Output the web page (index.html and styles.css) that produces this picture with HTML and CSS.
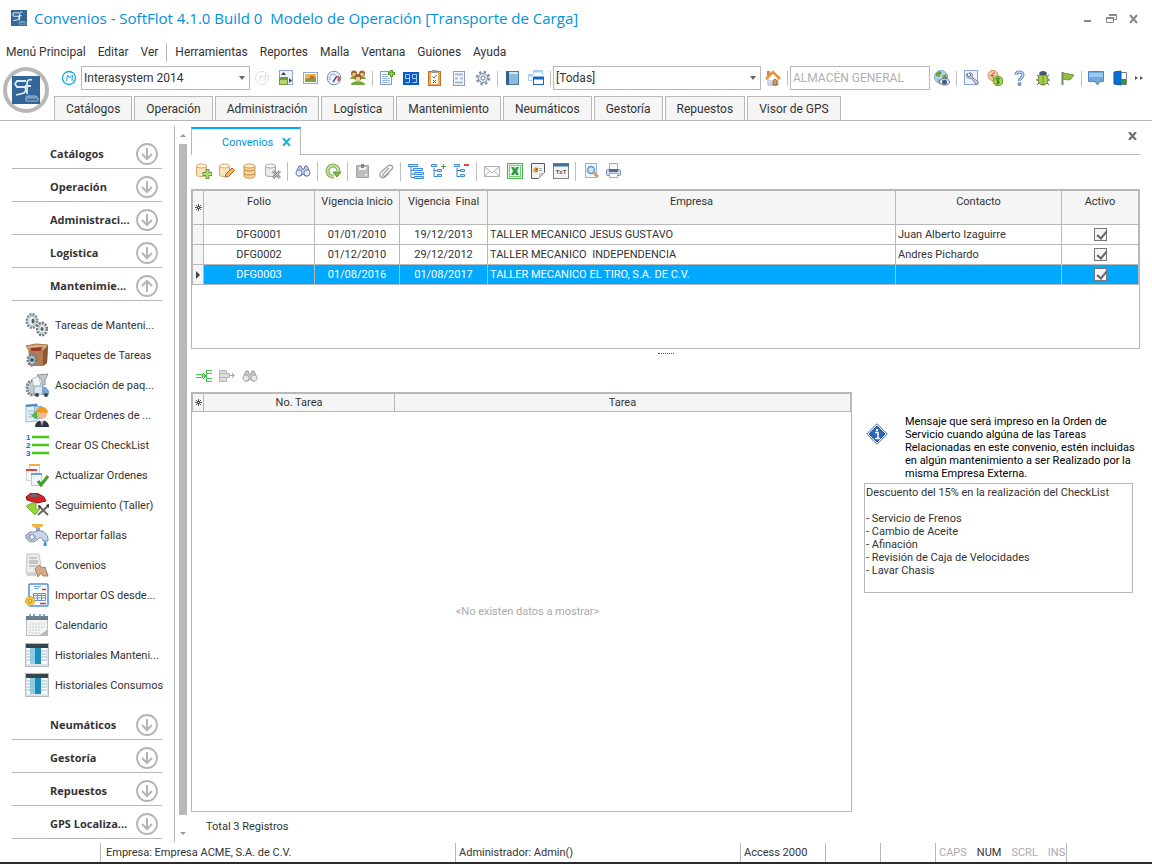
FILE: index.html
```html
<!DOCTYPE html>
<html lang="es">
<head>
    <meta charset="UTF-8">
    <meta name="viewport" content="width=device-width, initial-scale=1.0">
    <title>Convenios - SoftFlot 4.1.0 Build 0</title>
    <link rel="stylesheet" href="styles.css">
</head>
<body>
    <!-- Icon sprite -->
    <svg class="sprite" aria-hidden="true">
        <symbol id="logo" viewBox="0 0 28 28">
            <rect width="28" height="28" fill="#336699"/>
            <path d="M14 5H5L3 8l2 3h8l1 3-2 3-8 2M15 7v11M15 8c0-4 2-5 5-4M13 10h6" fill="none" stroke="#dce8f2" stroke-width="1.800"/>
            <path d="M15 20h9l2 2v3H14v-4z" fill="none" stroke="#9dbcd8"/>
            <path d="M14 22h11M17 20v2M20 20v2M23 20v2" stroke="#9dbcd8"/>
        </symbol>
        <symbol id="m-blue" viewBox="0 0 16 16">
            <circle cx="8" cy="8" r="6.500" fill="#fff" stroke="#14a5e8" stroke-width="1.300"/>
            <path d="M5.500 11l1-6 2 3 3-3-.5 6" fill="none" stroke="#14a5e8"/>
        </symbol>
        <symbol id="m-grey" viewBox="0 0 16 16">
            <circle cx="8" cy="8" r="6.500" fill="#fff" stroke="#dcdcdc"/>
            <path d="M5.500 11l1-6 2 3 3-3-.5 6" fill="none" stroke="#dcdcdc"/>
        </symbol>
        <symbol id="resize" viewBox="0 0 16 16">
            <rect x="1.500" y=".5" width="13" height="14" fill="#eef3fb" stroke="#8aa3d0"/>
            <rect x="1" y="7" width="9" height="8" fill="#6d9a32"/>
            <rect x="2" y="10" width="7" height="4" fill="#b5d66e"/>
            <path d="M3 5l2.500-3L8 5zM11 8l3 2.500L11 13z" fill="#444"/>
        </symbol>
        <symbol id="photo" viewBox="0 0 16 16">
            <rect x="1.500" y="2.500" width="14" height="11" fill="#fff" stroke="#8ea6dc"/>
            <rect x="3" y="4" width="11" height="8" fill="#f0b540"/>
            <path d="M3 9l4-1 3 1 4-2v5H3z" fill="#7ba04a"/>
            <path d="M8 5l1 1h2l1-1v4H8z" fill="#c46a2c"/>
        </symbol>
        <symbol id="gauge" viewBox="0 0 16 16">
            <circle cx="8" cy="8" r="6.800" fill="#eef4fc" stroke="#6d8cc4"/>
            <path d="M4 10a4 4 0 0 1 6-5" fill="none" stroke="#86a4d4" stroke-width="2" stroke-dasharray="1 1"/>
            <path d="M12 6a4 4 0 0 1 0 5" fill="none" stroke="#e04c3c" stroke-width="2"/>
            <path d="M7 12l4-6" stroke="#3d568e" stroke-width="1.500"/>
        </symbol>
        <symbol id="people" viewBox="0 0 16 16">
            <path d="M0 9c1-4 6-4 7 0zM9 9c1-4 6-4 7 0z" fill="#7fa534"/>
            <circle cx="4" cy="3.500" r="3" fill="#a8652c"/>
            <circle cx="12" cy="3.500" r="3" fill="#a8652c"/>
            <circle cx="4" cy="4.500" r="1.800" fill="#f1c596"/>
            <circle cx="12" cy="4.500" r="1.800" fill="#f1c596"/>
            <path d="M1 15c0-5 14-5 14 0z" fill="#6da83a"/>
            <circle cx="8" cy="7.500" r="3.500" fill="#9c5c28"/>
            <circle cx="8" cy="9" r="2.300" fill="#f5cfa3"/>
        </symbol>
        <symbol id="sheet-add" viewBox="0 0 16 16">
            <rect x="1.500" y="1.500" width="11" height="13" fill="#fff" stroke="#7f9bd0"/>
            <path d="M3 4.500h6M3 6.500h6M3 8.500h8M3 10.500h8M3 12.500h8" stroke="#9ab3e0"/>
            <path d="M12.500 0v7M9 3.500h7" stroke="#5b9a2a" stroke-width="3"/>
            <path d="M12.500 1v5M10 3.500h5" stroke="#a4d65e"/>
        </symbol>
        <symbol id="ninety-nine" viewBox="0 0 16 16">
            <rect y="2" width="16" height="13" fill="#0b5cc8"/>
            <path d="M6.500 8.500h-4v-4h4v8h-4M13.500 8.500h-4v-4h4v8h-4" fill="none" stroke="#a9cdf4"/>
        </symbol>
        <symbol id="clipboard" viewBox="0 0 16 16">
            <rect x="1.500" y="1.500" width="12" height="14" fill="#eeaa58" stroke="#b8742c"/>
            <rect x="4" y="3" width="7" height="11" fill="#fff"/>
            <rect x="5" y="0" width="5" height="3" fill="#999"/>
            <path d="M5.500 6.500l1.500 1.500 2.500-3" fill="none" stroke="#3b8b2a"/>
            <path d="M6 10l3 3M9 10l-3 3" stroke="#c42b2b"/>
        </symbol>
        <symbol id="form" viewBox="0 0 16 16">
            <rect x="2.500" y="1.500" width="11" height="14" fill="#f4f8fe" stroke="#8d9cc5"/>
            <path d="M4 4.500h8M4 8.500h3M9 8.500h3M4 12.500h8" stroke="#a4b8e0" stroke-width="2"/>
        </symbol>
        <symbol id="gear" viewBox="0 0 16 16">
            <circle cx="8" cy="8" r="6" fill="none" stroke="#8592aa" stroke-width="2.500" stroke-dasharray="2.500 2.200"/>
            <circle cx="8" cy="8" r="4.500" fill="#e4e9f1" stroke="#8592aa"/>
            <circle cx="8" cy="8" r="2" fill="#fff" stroke="#71809b"/>
        </symbol>
        <symbol id="book" viewBox="0 0 16 16">
            <rect x="2.500" y="1.500" width="12" height="13" fill="#8abce0" stroke="#4a7aa8"/>
            <rect x="2" y="1" width="3" height="14" fill="#355f8c"/>
            <path d="M5 3h9" stroke="#cfe4f4" stroke-width="2"/>
        </symbol>
        <symbol id="windows" viewBox="0 0 16 16">
            <path d="M5.500 4V.5h9V5M.5 10.500v-6h5M.5 10.500h4" fill="none" stroke="#a9cdf4"/>
            <path d="M5 1.500h10M0 5.500h5" stroke="#a9cdf4" stroke-width="2"/>
            <rect x="5.500" y="7.500" width="10" height="7" fill="#fff" stroke="#1066cc"/>
            <path d="M5 8h11" stroke="#1066cc" stroke-width="3"/>
        </symbol>
        <symbol id="home" viewBox="0 0 16 16">
            <rect x="2" y="1" width="3" height="5" fill="#d8843e"/>
            <path d="M3 8l5-5 5 5v7H3z" fill="#fff" stroke="#97a9c8"/>
            <path d="M1 9l7-7 7 7" fill="none" stroke="#e8923a" stroke-width="2.500"/>
            <path d="M8 15v-4c0-2 4-2 4 0v4z" fill="#d09c60" stroke="#976330"/>
            <path d="M4 11h3M4 13h3" stroke="#8fb0e0"/>
        </symbol>
        <symbol id="globe" viewBox="0 0 16 16">
            <circle cx="7" cy="7" r="6.500" fill="#b4d4ee" stroke="#7ba0c4"/>
            <path d="M2 3l4-2 2 2-3 4-3-1zM8 6l4-2 1 4-3 2zM3 9l3 1v3z" fill="#6ba043"/>
            <path d="M5 12c2-5 9-5 11 0-2 4-9 4-11 0z" fill="#e4ebf8" stroke="#5c6a8c"/>
            <circle cx="10.500" cy="12" r="2.500" fill="#4a5b86"/>
        </symbol>
        <symbol id="wrench" viewBox="0 0 16 16">
            <rect x="1.500" y=".5" width="13" height="14" fill="#eff4fc" stroke="#8aa1d6"/>
            <path d="M5 3c-3 3-1 6 3 5l5 6c2 1 3-1 2-2l-6-5c1-3-1-5-3-4l2 2-2 2-2-2z" fill="#d2dae8" stroke="#68789c"/>
        </symbol>
        <symbol id="coins" viewBox="0 0 16 16">
            <circle cx="6" cy="5.500" r="5" fill="#f8cca4" stroke="#d08a54"/>
            <path d="M8 3c-4-1-4 6 0 5M3 5.500h4" fill="none" stroke="#b8642c"/>
            <circle cx="11" cy="11" r="4.800" fill="#a8d450" stroke="#5f9428"/>
            <path d="M13 9c-4-2-5 1-2 2s1 3-2 2M11 7.500v7" fill="none" stroke="#2f6e10"/>
        </symbol>
        <symbol id="help" viewBox="0 0 16 16">
            <path d="M5 5c0-4 7-4 7 0 0 3-3.500 2.500-3.500 6" fill="none" stroke="#5a80bc" stroke-width="3"/>
            <path d="M5 5c0-4 7-4 7 0 0 3-3.500 2.500-3.500 6" fill="none" stroke="#b4d4f4" stroke-width="1.500"/>
            <circle cx="8.500" cy="14" r="1.500" fill="#7daade" stroke="#5a80bc"/>
        </symbol>
        <symbol id="bug" viewBox="0 0 16 16">
            <path d="M2 5l3 2M14 5l-3 2M1 10h14M2 15l3-3M14 15l-3-3" stroke="#556" fill="none"/>
            <ellipse cx="8" cy="9.500" rx="5" ry="5.500" fill="#a4cc44" stroke="#5f7f2e"/>
            <path d="M4 4c0-4 8-4 8 0-2 2-6 2-8 0z" fill="#4a5570"/>
            <path d="M8 5v10" stroke="#6f9432"/>
        </symbol>
        <symbol id="flag" viewBox="0 0 16 16">
            <path d="M3.500 2v13" stroke="#787" stroke-width="2"/>
            <path d="M4 3l6 1 5 1-3 4-3 1-5-1z" fill="#93bf49" stroke="#6f9a3c"/>
        </symbol>
        <symbol id="chat" viewBox="0 0 16 16">
            <path d="M.5 1.500h15v10H12L9.500 15 7 11.500H.5z" fill="#6fa9de" stroke="#4f86c0"/>
            <path d="M1 3h14v4H1z" fill="#9ccaf0"/>
        </symbol>
        <symbol id="exit" viewBox="0 0 16 16">
            <path d="M7.500 2.500h7v12h-7z" fill="#fff" stroke="#7a8594"/>
            <path d="M2 2l7-1v14l-7-1z" fill="#0c6ed4" stroke="#0c56aa"/>
            <rect x="9" y="9" width="5" height="5" fill="#1f9e3c"/>
        </symbol>
        <symbol id="db" viewBox="0 0 16 16">
            <path d="M2 3v10c0 3 11 3 11 0V3z" fill="#f6d49c" stroke="#cc9654"/>
            <path d="M2 6.500c2 2 9 2 11 0M2 10.500c2 2 9 2 11 0" fill="none" stroke="#c0843c"/>
            <ellipse cx="7.500" cy="3" rx="5.500" ry="2" fill="#fdf0d8" stroke="#cc9654"/>
        </symbol>
        <symbol id="db-add" viewBox="0 0 16 16">
            <path d="M.5 3v9c0 2 10 2 10 0V3z" fill="#fae3bd" stroke="#d8a66a"/>
            <ellipse cx="5.500" cy="3" rx="5" ry="2" fill="#fff5e4" stroke="#d8a66a"/>
            <path d="M11.500 6v10M6.500 11h10" stroke="#64983c" stroke-width="4"/>
            <path d="M11.500 7v8M7.500 11h8" stroke="#b4e07a" stroke-width="2"/>
        </symbol>
        <symbol id="db-edit" viewBox="0 0 16 16">
            <path d="M.5 3v9c0 2 10 2 10 0V3z" fill="#fae3bd" stroke="#d8a66a"/>
            <ellipse cx="5.500" cy="3" rx="5" ry="2" fill="#fff5e4" stroke="#d8a66a"/>
            <path d="M6 14l1-3 6-6 2.500 2.500-6 6z" fill="#f4b860" stroke="#a86a2c"/>
        </symbol>
        <symbol id="db-del" viewBox="0 0 16 16">
            <path d="M.5 3v9c0 2 10 2 10 0V3z" fill="#ececec" stroke="#a8a8a8"/>
            <ellipse cx="5.500" cy="3" rx="5" ry="2" fill="#f8f8f8" stroke="#a8a8a8"/>
            <path d="M8 8l7 7M15 8l-7 7" stroke="#8c8c8c" stroke-width="3"/>
            <path d="M8 8l7 7M15 8l-7 7" stroke="#cfcfcf"/>
        </symbol>
        <symbol id="find" viewBox="0 0 16 16">
            <path d="M3 5l1-2h2l1 3h2l1-3h2l1 2 2 5-2 3h-3l-2-2-2 2H3l-2-3z" fill="#bccae4" stroke="#6a7da4"/>
            <circle cx="4" cy="10" r="3" fill="#e4ecf8" stroke="#7088b8"/>
            <circle cx="12" cy="10" r="3" fill="#e4ecf8" stroke="#7088b8"/>
        </symbol>
        <symbol id="find-grey" viewBox="0 0 16 16">
            <path d="M3 5l1-2h2l1 3h2l1-3h2l1 2 2 5-2 3h-3l-2-2-2 2H3l-2-3z" fill="#c8c8c8" stroke="#a0a0a0"/>
            <circle cx="4" cy="10" r="3" fill="#e8e8e8" stroke="#b0b0b0"/>
            <circle cx="12" cy="10" r="3" fill="#e8e8e8" stroke="#b0b0b0"/>
        </symbol>
        <symbol id="refresh" viewBox="0 0 16 16">
            <path d="M9 13.500A5.500 5.500 0 1 1 13.500 8" fill="none" stroke="#88ac5c" stroke-width="4"/>
            <path d="M9 13.500A5.500 5.500 0 1 1 13.500 8" fill="none" stroke="#c4e09c" stroke-width="2"/>
            <path d="M8 9h8l-4 5z" fill="#7fb848" stroke="#5d8f32"/>
        </symbol>
        <symbol id="note" viewBox="0 0 16 16">
            <path d="M1.500 2.500h12v12h-12z" fill="#bdbdbd" stroke="#a4a4a4"/>
            <rect x="4" y="4" width="7" height="3" fill="#f4f4f4"/>
            <path d="M6 1h3v4H6z" fill="#888"/>
            <path d="M10 14v-3h3z" fill="#eee"/>
        </symbol>
        <symbol id="clip" viewBox="0 0 16 16">
            <path d="M11 5l-6 6c-1 2 1 3 2 2l7-7c2-3-2-5-4-3L3 9c-3 4 1 7 4 5l4-4" fill="none" stroke="#9c9c9c" stroke-width="1.200"/>
        </symbol>
        <symbol id="tree" viewBox="0 0 16 16">
            <path d="M3 4v10.500h4M3 7.500h4M3 11h4" fill="none" stroke="#3c8ce0"/>
            <path d="M.5 1.500h9v2h-9zM5.500 5.500h9v2h-9zM6.500 9.500h9v2h-9zM6.500 13.500h9v2h-9z" fill="#d4e8fc" stroke="#3c8ce0"/>
        </symbol>
        <symbol id="tree-add" viewBox="0 0 16 16">
            <path d="M3 5v8.500h3M3 7.500h3" fill="none" stroke="#3c7cd0"/>
            <path d="M.5 1.500h5v2h-5zM6.500 6.500h4v2h-4zM6.500 11.500h4v2h-4z" fill="#d4e8fc" stroke="#3c8ce0"/>
            <path d="M12.500 1v5M10 3.500h5" stroke="#3f9a4c"/>
        </symbol>
        <symbol id="tree-del" viewBox="0 0 16 16">
            <path d="M3 5v8.500h3M3 7.500h3" fill="none" stroke="#3c7cd0"/>
            <path d="M.5 1.500h5v2h-5zM6.500 6.500h4v2h-4zM6.500 11.500h4v2h-4z" fill="#d4e8fc" stroke="#3c8ce0"/>
            <path d="M10 2h5" stroke="#dc4c30" stroke-width="2"/>
        </symbol>
        <symbol id="mail" viewBox="0 0 16 16">
            <path d="M.5 3.500h15v10H.5z" fill="#fafafa" stroke="#b0b0b0"/>
            <path d="M1 4l7 6 7-6M1 13l5-5M15 13l-5-5" fill="none" stroke="#b8b8b8"/>
        </symbol>
        <symbol id="excel" viewBox="0 0 16 16">
            <rect x=".5" y=".5" width="15" height="15" fill="#d8f4d4" stroke="#48b858"/>
            <rect x="2.500" y="2.500" width="11" height="11" fill="#eefaea" stroke="#7ccc7c"/>
            <path d="M4 4h3l1 2 1-2h3l-2 4 2 4H9L8 10l-1 2H4l2-4z" fill="#2f9a46"/>
        </symbol>
        <symbol id="chart-doc" viewBox="0 0 16 16">
            <path d="M1.500.5h13v9l-6 6h-7z" fill="#f2f2f2" stroke="#5a5a5a"/>
            <path d="M9 15v-5h5z" fill="#ccc"/>
            <circle cx="5.500" cy="7" r="2.500" fill="#f0b030"/>
            <path d="M5.500 7V4.500A2.500 2.500 0 0 1 8 7z" fill="#e03c2c"/>
            <path d="M5.500 7H8a2.500 2.500 0 0 1-2.500 2.500z" fill="#66a83c"/>
            <path d="M9 5.500h3M9 7.500h3" stroke="#9ab"/>
        </symbol>
        <symbol id="preview" viewBox="0 0 16 16">
            <rect x="2.500" y=".5" width="11" height="14" fill="#f0f5fd" stroke="#9cb0d8"/>
            <circle cx="8" cy="7" r="3.500" fill="#cce4f8" stroke="#6a90cc" stroke-width="1.500"/>
            <path d="M11 10l4 4" stroke="#d89a5c" stroke-width="3"/>
        </symbol>
        <symbol id="print" viewBox="0 0 16 16">
            <path d="M3.500.5h8v6h-8z" fill="#f4f8ff" stroke="#9aaad0"/>
            <rect x=".5" y="6.500" width="14" height="6" rx="1" fill="#ccd6ec" stroke="#7c8eb8"/>
            <rect x="3" y="6" width="9" height="3" fill="#56679a"/>
            <path d="M3.500 10.500h8v4h-8z" fill="#fff" stroke="#9aaad0"/>
        </symbol>
        <symbol id="row-in" viewBox="0 0 16 16">
            <path d="M0 6.500h6M0 9.500h6M6.500 6v4M10.500 2v12M10.500 2.500H16M10.500 5.500H16M10.500 10.500H16M10.500 13.500H16" fill="none" stroke="#43cc4c"/>
            <path d="M6 8h4M7 5l3 3-3 3" fill="none" stroke="#348c40"/>
        </symbol>
        <symbol id="row-out" viewBox="0 0 16 16">
            <path d="M.5 2.500h7v3h3v4h-3v4h-7zM.5 5.500h7M.5 9.500h7" fill="#ddd" stroke="#b4b4b4"/>
            <path d="M10 7.500h5M13 5l2.500 2.500L13 10" fill="none" stroke="#a4a4a4"/>
        </symbol>
        <symbol id="new-row" viewBox="0 0 7 7">
            <path d="M3.500 0v7M0 3.500h7M1 1l5 5M6 1L1 6" stroke="#555"/>
            <rect x="3" y="3" width="1" height="1" fill="#fff"/>
        </symbol>
        <symbol id="down" viewBox="0 0 22 22">
            <circle cx="11" cy="11" r="10" fill="#fff" stroke="#b4b4b4" stroke-width="1.800"/>
            <path d="M11 5v11M6 11l5 5 5-5" fill="none" stroke="#b4b4b4" stroke-width="2"/>
        </symbol>
        <symbol id="up" viewBox="0 0 22 22">
            <circle cx="11" cy="11" r="10" fill="#fff" stroke="#b4b4b4" stroke-width="1.800"/>
            <path d="M11 17V6M6 11l5-5 5 5" fill="none" stroke="#b4b4b4" stroke-width="2"/>
        </symbol>

        <!-- Side menu icons -->
        <symbol id="s-gears" viewBox="0 0 24 24">
            <ellipse cx="7" cy="8" rx="5" ry="6.500" fill="#d4dce0" stroke="#7c8a92" stroke-width="3" stroke-dasharray="2 1"/>
            <ellipse cx="7" cy="8" rx="4.500" ry="5.500" fill="#c4ced4"/>
            <ellipse cx="7" cy="8" rx="3" ry="4" fill="#eef2f4"/>
            <ellipse cx="8" cy="8" rx="1.500" ry="2.500" fill="#4c5c64"/>
            <ellipse cx="17" cy="16" rx="4.500" ry="6" fill="#e0e6ea" stroke="#68767e" stroke-width="3" stroke-dasharray="2 1"/>
            <ellipse cx="17" cy="16" rx="4" ry="5" fill="#c4ced4"/>
            <ellipse cx="17" cy="16" rx="2.500" ry="3.500" fill="#eef2f4"/>
            <ellipse cx="17" cy="16" rx="1.500" ry="2" fill="#4c5c64"/>
        </symbol>
        <symbol id="s-box" viewBox="0 0 24 24">
            <path d="M3 5l15-1 5-2-1 18-4 3H5z" fill="#b47c50"/>
            <path d="M1 3l10-2 12 1-4 5H4z" fill="#d8b088" stroke="#a57040"/>
            <path d="M5 5l13-1-3 4H7z" fill="#9c3828"/>
            <path d="M18 8l5-5-1 17-4 3z" fill="#8c5834"/>
            <ellipse cx="7" cy="17" rx="4" ry="5" fill="#cfd8dc" stroke="#6c7c84" stroke-width="3" stroke-dasharray="2 1"/>
            <circle cx="7" cy="17" r="2" fill="#4a5a62"/>
        </symbol>
        <symbol id="s-truck" viewBox="0 0 24 24">
            <ellipse cx="7" cy="15" rx="5" ry="7" fill="#c4ccd2" stroke="#78868e" stroke-width="3" stroke-dasharray="2 1"/>
            <path d="M7 6l7-3 2 10-7 2z" fill="#f4f6f8" stroke="#b4bcc4"/>
            <path d="M12 2l11-1-3 6v5h-3V7z" fill="#c4c9ce" stroke="#8c949c"/>
            <path d="M9 13h9v8H9z" fill="#dce6f0" stroke="#94a4b4"/>
            <path d="M17 14h4l3 4v4h-7z" fill="#7aa4d0"/>
            <circle cx="12" cy="22" r="2" fill="#444"/>
            <circle cx="21" cy="22" r="2" fill="#444"/>
        </symbol>
        <symbol id="s-worker" viewBox="0 0 24 24">
            <path d="M1 2l11-1v17l-11 1z" fill="#e8f1fa" stroke="#a0b8cc"/>
            <path d="M1 3l11-1" stroke="#4484c4" stroke-width="2"/>
            <path d="M9.500 3.500h7v12h-7z" fill="#b8d8f4" stroke="#7cb0e0"/>
            <path d="M3 8h7M3 11h6M3 14h5" stroke="#9db8d0"/>
            <path d="M6 13l6-6v3h4v4h-4v2z" fill="#58b43c"/>
            <circle cx="17" cy="11" r="5" fill="#efb98c"/>
            <path d="M11 9c1-7 11-7 12 1z" fill="#f09a20"/>
            <path d="M10 24c0-9 14-9 14 0z" fill="#28344c"/>
            <path d="M15 17h4l-2 6z" fill="#fff"/>
            <path d="M17 18v5" stroke="#c42c2c"/>
        </symbol>
        <symbol id="s-update" viewBox="0 0 24 24">
            <path d="M4.500 1.500h10v12h-10z" fill="#f6f8fa" stroke="#ccd2d8"/>
            <path d="M4 2h11" stroke="#f0b040" stroke-width="2"/>
            <path d="M1.500 6.500h10v11h-10z" fill="#f6f8fa" stroke="#ccd2d8"/>
            <path d="M1 7h11" stroke="#dc4444" stroke-width="2"/>
            <path d="M6.500 10.500h10v12h-10z" fill="#f1f6fc" stroke="#b9cad8"/>
            <path d="M6 11h11" stroke="#6c9cdc" stroke-width="2"/>
            <path d="M13 18l3 4 7-9" fill="none" stroke="#459c28" stroke-width="3"/>
        </symbol>
        <symbol id="s-car" viewBox="0 0 24 24">
            <path d="M1 4l5-4h6l7 4 2 4-9 2-10-3z" fill="#d42424" stroke="#8c1c1c"/>
            <path d="M6 1h5l2 3H5z" fill="#646c78"/>
            <path d="M1 13l6-3 4 1v5h4l-5 6-6-6z" fill="#94d434" stroke="#7ab438"/>
            <path d="M13 22l10-9M14 13l9 9" stroke="#666" stroke-width="2"/>
            <path d="M13 12l3 1-2 3zM21 12l3-1v4z" fill="#333"/>
        </symbol>
        <symbol id="s-tap" viewBox="0 0 24 24">
            <path d="M7 1h11v2l-4 2h-4L7 3z" fill="#f0b43c"/>
            <path d="M11 5h4v5h-4z" fill="#96a2bc"/>
            <path d="M1 12l4-3h5c3-2 8-2 11 2 2 2 2 5 2 7h-5c0-4-3-4-5-2-3 4-9 4-12-1z" fill="#ccd6ea" stroke="#7c88a6"/>
            <path d="M3 10l8 3 1 3-6 2-4-3z" fill="#a9b6d2"/>
            <circle cx="7" cy="14" r="2.500" fill="#eef4ff" stroke="#7c8aa8"/>
            <path d="M20 18c-2 3-2 5 0 5s3-2 0-5z" fill="#3c94e4"/>
        </symbol>
        <symbol id="s-deal" viewBox="0 0 24 24">
            <path d="M2 1h12l3 19H1z" fill="#ececec" stroke="#c4c4c4"/>
            <path d="M4 5h8M4 8h9M4 10h9M4 13h8" stroke="#9c9c9c"/>
            <path d="M10 16l4-4 3 3 3-1 3 9h-5l-2-3-3 4z" fill="#d4ac88" stroke="#a48464"/>
            <path d="M1 20h10v3H2z" fill="#d0d0d0"/>
        </symbol>
        <symbol id="s-import" viewBox="0 0 24 24">
            <rect x="4" y="1" width="19" height="22" rx="1" fill="#fafdff" stroke="#4c90e0" stroke-width="1.500"/>
            <path d="M9 3.500h7M9 5.500h5" stroke="#78a8dc"/>
            <path d="M17 6.500h4M15 20.500h6" stroke="#dc3030" stroke-width="1.500"/>
            <path d="M8.500 10.500h12v7h-12zM8 12.500h12M8 15h12M12.500 10v8M16.500 10v8" fill="none" stroke="#6c94cc"/>
            <circle cx="5" cy="18" r="4.500" fill="#f8cc4c" stroke="#dca42c"/>
            <circle cx="5" cy="18" r="2" fill="none" stroke="#c8901c"/>
        </symbol>
        <symbol id="s-calendar" viewBox="0 0 24 24">
            <rect x="1.500" y="3.500" width="21" height="19" fill="#f2f4f4" stroke="#b4bcc0"/>
            <path d="M1 3h22v4H1z" fill="#6e7c88"/>
            <path d="M5 1v4M9 1v4M15 1v4M19 1v4" stroke="#5c90b8" stroke-width="1.500"/>
            <path d="M4 11h16M4 14h16M4 17h12M4 20h12" stroke="#c4cacc" stroke-dasharray="2 1"/>
            <path d="M15 22l7-5v6z" fill="#b4bcc0"/>
        </symbol>
        <symbol id="s-history" viewBox="0 0 24 24">
            <rect x=".5" y=".5" width="23" height="23" fill="#dfe3e5" stroke="#b4babe"/>
            <path d="M2 4h20v17H2z" fill="#fff"/>
            <path d="M1 3h22" stroke="#36444c" stroke-width="4"/>
            <path d="M5 5h5v16H5z" fill="#8cd0f0"/>
            <path d="M10 5h6v16h-6z" fill="#1c8cb8"/>
            <path d="M2 8h20M2 11h20M2 14h20M2 17h20" stroke="#98b8c8" stroke-dasharray="8 6"/>
        </symbol>
        <symbol id="info" viewBox="0 0 22 22">
            <path d="M11 .7L21.300 11 11 21.300.7 11z" fill="#fff" stroke="#3c6cb0"/>
            <path d="M11 3l8 8-8 8-8-8z" fill="#2b66b8" stroke="#1d4f98"/>
            <path d="M9 9.500h3V15M9 15.500h5" fill="none" stroke="#fff" stroke-width="1.500"/>
            <rect x="10" y="6" width="2" height="2" fill="#fff"/>
        </symbol>
    </svg>

    <header>
        <div class="titlebar">
            <svg class="icon"><use href="#logo"/></svg>
            <h1>Convenios - SoftFlot 4.1.0 Build 0&nbsp; Modelo de Operación [Transporte de Carga]</h1>
            <div class="window-buttons">
                <button type="button" aria-label="Minimizar"><svg class="icon" viewBox="0 0 16 16"><path d="M4 11h7" stroke="#8a8a8a" stroke-width="2"/></svg></button>
                <button type="button" aria-label="Restaurar"><svg class="icon" viewBox="0 0 16 16"><path d="M6.500 6V4.500h7v5H11M3.500 7.500h7v5h-7z" fill="none" stroke="#8a8a8a"/><path d="M6 5h8M3 8h8" stroke="#8a8a8a" stroke-width="2"/></svg></button>
                <button type="button" aria-label="Cerrar"><svg class="icon" viewBox="0 0 16 16"><path d="M4 5l7 8M11 5l-7 8" stroke="#8a8a8a" stroke-width="2"/></svg></button>
            </div>
        </div>

        <nav class="menubar">
            <a href="#">Menú Principal</a>
            <a href="#">Editar</a>
            <a href="#">Ver</a>
            <span class="divider"></span>
            <a href="#">Herramientas</a>
            <a href="#">Reportes</a>
            <a href="#">Malla</a>
            <a href="#">Ventana</a>
            <a href="#">Guiones</a>
            <a href="#">Ayuda</a>
        </nav>

        <div class="ribbon">
            <div class="app-logo"><svg><use href="#logo"/></svg></div>
            <div class="ribbon-rows">
                <div class="toolbar main-toolbar">
                    <button type="button" aria-label="Modelo"><svg class="icon"><use href="#m-blue"/></svg></button>
                    <div class="combo combo-model">
                        <select aria-label="Modelo de operación"><option>Interasystem 2014</option></select>
                    </div>
                    <button type="button" aria-label="Modelo anterior" disabled><svg class="icon"><use href="#m-grey"/></svg></button>
                    <button type="button" aria-label="Dimensiones"><svg class="icon"><use href="#resize"/></svg></button>
                    <button type="button" aria-label="Imágenes"><svg class="icon"><use href="#photo"/></svg></button>
                    <button type="button" aria-label="Tablero"><svg class="icon"><use href="#gauge"/></svg></button>
                    <button type="button" aria-label="Usuarios"><svg class="icon"><use href="#people"/></svg></button>
                    <span class="divider"></span>
                    <button type="button" aria-label="Nueva orden"><svg class="icon"><use href="#sheet-add"/></svg></button>
                    <button type="button" aria-label="Odómetro"><svg class="icon"><use href="#ninety-nine"/></svg></button>
                    <button type="button" aria-label="Checklist"><svg class="icon"><use href="#clipboard"/></svg></button>
                    <button type="button" aria-label="Formato"><svg class="icon"><use href="#form"/></svg></button>
                    <button type="button" aria-label="Configuración"><svg class="icon"><use href="#gear"/></svg></button>
                    <span class="divider"></span>
                    <button type="button" aria-label="Bitácora"><svg class="icon"><use href="#book"/></svg></button>
                    <button type="button" aria-label="Ventanas"><svg class="icon"><use href="#windows"/></svg></button>
                    <span class="divider"></span>
                    <div class="combo combo-filter">
                        <select aria-label="Filtro"><option>[Todas]</option></select>
                    </div>
                    <button type="button" aria-label="Inicio"><svg class="icon"><use href="#home"/></svg></button>
                    <span class="divider"></span>
                    <input class="warehouse" type="text" value="ALMACÉN GENERAL" aria-label="Almacén" disabled>
                    <button type="button" aria-label="Localizar"><svg class="icon"><use href="#globe"/></svg></button>
                    <span class="divider"></span>
                    <button type="button" aria-label="Herramientas"><svg class="icon"><use href="#wrench"/></svg></button>
                    <button type="button" aria-label="Monedas"><svg class="icon"><use href="#coins"/></svg></button>
                    <button type="button" aria-label="Ayuda"><svg class="icon"><use href="#help"/></svg></button>
                    <button type="button" aria-label="Reportar error"><svg class="icon"><use href="#bug"/></svg></button>
                    <button type="button" aria-label="Bandera"><svg class="icon"><use href="#flag"/></svg></button>
                    <span class="divider"></span>
                    <button type="button" aria-label="Mensajes"><svg class="icon"><use href="#chat"/></svg></button>
                    <button type="button" aria-label="Salir"><svg class="icon"><use href="#exit"/></svg></button>
                    <button type="button" class="more" aria-label="Más"><svg width="8" height="6" viewBox="0 0 8 6"><path d="M0 1l3 2-3 2zM5 1l3 2-3 2z" fill="#555"/></svg></button>
                </div>
                <nav class="ribbon-tabs">
                    <a href="#">Catálogos</a>
                    <a href="#">Operación</a>
                    <a href="#">Administración</a>
                    <a href="#">Logística</a>
                    <a href="#">Mantenimiento</a>
                    <a href="#">Neumáticos</a>
                    <a href="#">Gestoría</a>
                    <a href="#">Repuestos</a>
                    <a href="#">Visor de GPS</a>
                </nav>
            </div>
        </div>
    </header>

    <div class="workspace">
        <aside class="sidebar">
            <button type="button" class="group">Catálogos<svg><use href="#down"/></svg></button>
            <button type="button" class="group">Operación<svg><use href="#down"/></svg></button>
            <button type="button" class="group">Administraci...<svg><use href="#down"/></svg></button>
            <button type="button" class="group">Logistica<svg><use href="#down"/></svg></button>
            <button type="button" class="group">Mantenimie...<svg><use href="#up"/></svg></button>
            <ul class="group-items">
                <li><a href="#"><svg><use href="#s-gears"/></svg>Tareas de Manteni...</a></li>
                <li><a href="#"><svg><use href="#s-box"/></svg>Paquetes de Tareas</a></li>
                <li><a href="#"><svg><use href="#s-truck"/></svg>Asociación de paq...</a></li>
                <li><a href="#"><svg><use href="#s-worker"/></svg>Crear Ordenes de ...</a></li>
                <li><a href="#"><svg viewBox="0 0 24 24">
                    <path d="M7 4h17M7 12h17M7 20h17" stroke="#45c818" stroke-width="2.500"/>
                    <text x="1" y="7" class="list-digit">1</text>
                    <text x="1" y="15" class="list-digit">2</text>
                    <text x="1" y="23" class="list-digit">3</text>
                </svg>Crear OS CheckList</a></li>
                <li><a href="#"><svg><use href="#s-update"/></svg>Actualizar Ordenes</a></li>
                <li><a href="#"><svg><use href="#s-car"/></svg>Seguimiento (Taller)</a></li>
                <li><a href="#"><svg><use href="#s-tap"/></svg>Reportar fallas</a></li>
                <li><a href="#"><svg><use href="#s-deal"/></svg>Convenios</a></li>
                <li><a href="#"><svg><use href="#s-import"/></svg>Importar OS desde...</a></li>
                <li><a href="#"><svg><use href="#s-calendar"/></svg>Calendario</a></li>
                <li><a href="#"><svg><use href="#s-history"/></svg>Historiales Manteni...</a></li>
                <li><a href="#"><svg><use href="#s-history"/></svg>Historiales Consumos</a></li>
            </ul>
            <button type="button" class="group">Neumáticos<svg><use href="#down"/></svg></button>
            <button type="button" class="group">Gestoría<svg><use href="#down"/></svg></button>
            <button type="button" class="group">Repuestos<svg><use href="#down"/></svg></button>
            <button type="button" class="group">GPS Localiza...<svg><use href="#down"/></svg></button>
        </aside>

        <div class="scrollbar">
            <span class="arrow-up"></span>
            <span class="thumb"></span>
            <span class="arrow-down"></span>
        </div>

        <main>
            <div class="doc-tabs">
                <div class="doc-tab">
                    <a href="#">Convenios</a>
                    <button type="button" aria-label="Cerrar Convenios"><svg width="9" height="8" viewBox="0 0 9 8"><path d="M1 0l7 8M8 0L1 8" stroke="#14b4e0" stroke-width="2"/></svg></button>
                </div>
                <button type="button" class="doc-close" aria-label="Cerrar documento"><svg width="9" height="8" viewBox="0 0 9 8"><path d="M1 0l7 8M8 0L1 8" stroke="#666" stroke-width="2"/></svg></button>
            </div>

            <div class="toolbar grid-toolbar">
                <button type="button" aria-label="Agregar"><svg class="icon"><use href="#db-add"/></svg></button>
                <button type="button" aria-label="Modificar"><svg class="icon"><use href="#db-edit"/></svg></button>
                <button type="button" aria-label="Guardar"><svg class="icon"><use href="#db"/></svg></button>
                <button type="button" aria-label="Eliminar" disabled><svg class="icon"><use href="#db-del"/></svg></button>
                <span class="divider"></span>
                <button type="button" aria-label="Buscar"><svg class="icon"><use href="#find"/></svg></button>
                <span class="divider"></span>
                <button type="button" aria-label="Actualizar"><svg class="icon"><use href="#refresh"/></svg></button>
                <span class="divider"></span>
                <button type="button" aria-label="Notas" disabled><svg class="icon"><use href="#note"/></svg></button>
                <button type="button" aria-label="Adjuntos" disabled><svg class="icon"><use href="#clip"/></svg></button>
                <span class="divider"></span>
                <button type="button" aria-label="Agrupar"><svg class="icon"><use href="#tree"/></svg></button>
                <button type="button" aria-label="Expandir"><svg class="icon"><use href="#tree-add"/></svg></button>
                <button type="button" aria-label="Contraer"><svg class="icon"><use href="#tree-del"/></svg></button>
                <span class="divider"></span>
                <button type="button" aria-label="Correo" disabled><svg class="icon"><use href="#mail"/></svg></button>
                <button type="button" aria-label="Exportar a Excel"><svg class="icon"><use href="#excel"/></svg></button>
                <button type="button" aria-label="Exportar a HTML"><svg class="icon"><use href="#chart-doc"/></svg></button>
                <button type="button" aria-label="Exportar a texto"><svg class="icon" viewBox="0 0 16 16">
                    <rect x=".5" y=".5" width="15" height="15" fill="#f2f2f2" stroke="#808080"/>
                    <path d="M0 2h16" stroke="#41739c" stroke-width="3"/>
                    <text x="8" y="11" text-anchor="middle" class="txt-label">TxT</text>
                </svg></button>
                <span class="divider"></span>
                <button type="button" aria-label="Vista previa"><svg class="icon"><use href="#preview"/></svg></button>
                <button type="button" aria-label="Imprimir"><svg class="icon"><use href="#print"/></svg></button>
            </div>

            <div class="grid-box agreements">
                <table>
                    <colgroup>
                        <col class="col-mark"><col class="col-folio"><col class="col-start"><col class="col-end"><col><col class="col-contact"><col class="col-active">
                    </colgroup>
                    <thead>
                        <tr><th class="mark"><svg><use href="#new-row"/></svg></th><th>Folio</th><th>Vigencia Inicio</th><th>Vigencia&nbsp; Final</th><th>Empresa</th><th>Contacto</th><th>Activo</th></tr>
                    </thead>
                    <tbody>
                        <tr>
                            <td class="mark"></td>
                            <td class="center">DFG0001</td>
                            <td class="center">01/01/2010</td>
                            <td class="center">19/12/2013</td>
                            <td>TALLER MECANICO JESUS GUSTAVO</td>
                            <td>Juan Alberto Izaguirre</td>
                            <td class="center"><input type="checkbox" aria-label="Activo DFG0001" checked></td>
                        </tr>
                        <tr>
                            <td class="mark"></td>
                            <td class="center">DFG0002</td>
                            <td class="center">01/12/2010</td>
                            <td class="center">29/12/2012</td>
                            <td>TALLER MECANICO&nbsp; INDEPENDENCIA</td>
                            <td>Andres Pichardo</td>
                            <td class="center"><input type="checkbox" aria-label="Activo DFG0002" checked></td>
                        </tr>
                        <tr class="selected">
                            <td class="mark"><span class="current"></span></td>
                            <td class="center">DFG0003</td>
                            <td class="center">01/08/2016</td>
                            <td class="center">01/08/2017</td>
                            <td>TALLER MECANICO EL TIRO, S.A. DE C.V.</td>
                            <td></td>
                            <td class="center"><input type="checkbox" aria-label="Activo DFG0003" checked></td>
                        </tr>
                    </tbody>
                </table>
            </div>

            <div class="splitter"><span></span></div>

            <div class="detail">
                <section class="tasks">
                    <div class="toolbar grid-toolbar">
                        <button type="button" aria-label="Agregar tarea"><svg class="icon"><use href="#row-in"/></svg></button>
                        <button type="button" aria-label="Quitar tarea" disabled><svg class="icon"><use href="#row-out"/></svg></button>
                        <button type="button" aria-label="Buscar tarea" disabled><svg class="icon"><use href="#find-grey"/></svg></button>
                    </div>
                    <div class="grid-box task-grid">
                        <table>
                            <colgroup>
                                <col class="col-mark"><col class="col-task-no"><col>
                            </colgroup>
                            <thead>
                                <tr><th class="mark"><svg><use href="#new-row"/></svg></th><th>No. Tarea</th><th>Tarea</th></tr>
                            </thead>
                        </table>
                        <p class="empty">&lt;No existen datos a mostrar&gt;</p>
                    </div>
                </section>

                <section class="message">
                    <div class="message-label">
                        <svg><use href="#info"/></svg>
                        <label for="mensaje">Mensaje que será impreso en la Orden de Servicio cuando algúna de las Tareas Relacionadas en este convenio, estén incluidas en algún mantenimiento a ser Realizado por la misma Empresa Externa.</label>
                    </div>
                    <textarea id="mensaje">Descuento del 15% en la realización del CheckList

- Servicio de Frenos
- Cambio de Aceite
- Afinación
- Revisión de Caja de Velocidades
- Lavar Chasis</textarea>
                </section>
            </div>

            <p class="total">Total 3 Registros</p>
        </main>
    </div>

    <footer class="statusbar">
        <span class="pane pane-blank"></span>
        <span class="pane pane-company">Empresa: Empresa ACME, S.A. de C.V.</span>
        <span class="pane pane-admin">Administrador: Admin()</span>
        <span class="pane pane-access">Access 2000</span>
        <span class="pane pane-small"></span>
        <span class="pane pane-small"></span>
        <span class="pane pane-keys"><span>CAPS</span><span class="on">NUM</span><span>SCRL</span><span>INS</span></span>
    </footer>
</body>
</html>
```
FILE: styles.css
```css
/* General */
* {
    box-sizing: border-box;
}

body {
    display: flex;
    flex-direction: column;
    min-height: 100vh;
    margin: 0;
    font-family: Roboto, "Liberation Sans", sans-serif;
    font-size: 11px;
    color: #333;
    background-color: #fff;
}

button {
    display: flex;
    align-items: center;
    justify-content: center;
    padding: 0;
    border: none;
    background: none;
    font: inherit;
    color: inherit;
}

a {
    color: inherit;
    text-decoration: none;
}

svg {
    display: block;
    flex: none;
}

.sprite {
    position: absolute;
    width: 0;
    height: 0;
}

.icon {
    width: 16px;
    height: 16px;
}

.txt-label {
    font: bold 6px "Liberation Sans", sans-serif;
    fill: #555;
}

.list-digit {
    font: bold 8px "Liberation Sans", sans-serif;
    fill: #1464c8;
}

/* Title bar and menu */
.titlebar {
    display: flex;
    align-items: center;
    gap: 7px;
    height: 36px;
    padding: 0 10px 0 11px;
}

.titlebar h1 {
    flex: 1;
    margin: 0;
    font-family: "Open Sans", "Noto Sans", sans-serif;
    font-size: 15px;
    font-weight: normal;
    color: #0091e0;
}

.window-buttons {
    display: flex;
    gap: 7px;
}

.menubar {
    display: flex;
    align-items: center;
    height: 30px;
    padding-top: 2px;
    font-size: 12px;
}

.menubar a {
    padding: 0 6px;
}

.menubar .divider {
    width: 1px;
    height: 19px;
    margin: 0 2px;
    background-color: #b8b8b8;
}

/* Ribbon */
.ribbon {
    display: flex;
    gap: 5px;
    border-bottom: 1px solid #b8b8b8;
}

.app-logo {
    display: flex;
    align-items: center;
    justify-content: center;
    width: 46px;
    height: 46px;
    margin: 1px 0 7px 3px;
    border: 4px solid #b8b8b8;
    border-radius: 50%;
}

.app-logo svg {
    width: 28px;
    height: 28px;
}

.ribbon-rows {
    display: flex;
    flex: 1;
    flex-direction: column;
    justify-content: space-between;
}

.toolbar {
    display: flex;
    align-items: center;
}

.toolbar .divider {
    flex: none;
    width: 1px;
    height: 15px;
    margin: 0 2px;
    background-color: #c0c0c0;
}

.main-toolbar {
    height: 24px;
    padding-left: 3px;
}

.main-toolbar button {
    width: 24px;
    height: 24px;
}

.main-toolbar .more {
    width: 14px;
}

.combo {
    position: relative;
    height: 24px;
}

.combo::after {
    content: "";
    position: absolute;
    top: 10px;
    right: 5px;
    border: 3px solid transparent;
    border-top: 4px solid #666;
    border-bottom: none;
}

.combo select,
.warehouse {
    appearance: none;
    width: 100%;
    height: 24px;
    padding: 0 2px;
    border: 1px solid #b8b8b8;
    border-radius: 0;
    background-color: #fff;
    font-family: inherit;
    font-size: 12px;
    color: #333;
}

.combo-model {
    width: 169px;
}

.combo-filter {
    width: 208px;
}

.main-toolbar .warehouse {
    width: 140px;
    color: #b0b0b0;
}

.ribbon-tabs {
    display: flex;
    gap: 2px;
}

.ribbon-tabs a {
    padding: 1px 11px 0;
    border: 1px solid #b8b8b8;
    border-bottom: none;
    background-color: #f5f5f5;
    font-size: 12px;
    line-height: 22px;
}

/* Side menu */
.workspace {
    display: flex;
    flex: 1;
}

.sidebar {
    width: 175px;
    margin-top: 5px;
    padding: 10px 12px 0;
    border-right: 1px solid #b8b8b8;
}

.group {
    justify-content: space-between;
    width: 150px;
    height: 33px;
    padding: 3px 4px 0 38px;
    border-bottom: 1px solid #b8b8b8;
    font-family: "Open Sans", "Noto Sans", sans-serif;
    font-weight: bold;
}

.group svg {
    width: 22px;
    height: 22px;
}

.group-items {
    margin: 0;
    padding: 9px 0 7px;
    list-style: none;
}

.group-items a {
    display: flex;
    align-items: center;
    gap: 6px;
    height: 30px;
    padding-left: 13px;
    white-space: nowrap;
}

.group-items svg {
    width: 24px;
    height: 24px;
}

.scrollbar {
    display: flex;
    flex-direction: column;
    align-items: center;
    width: 8px;
    margin: 13px 4px 7px;
}

.thumb {
    flex: 1;
    width: 8px;
    margin: 7px 0 17px;
    background-color: #b8b8b8;
}

.arrow-up,
.arrow-down {
    border: 3px solid transparent;
}

.arrow-up {
    border-top: none;
    border-bottom-color: #999;
}

.arrow-down {
    border-bottom: none;
    border-top-color: #999;
}

/* Document area */
main {
    display: flex;
    flex: 1;
    flex-direction: column;
    min-width: 0;
    padding-right: 12px;
}

.doc-tabs {
    display: flex;
    justify-content: space-between;
    height: 34px;
    padding-top: 6px;
    border-bottom: 1px solid #b8b8b8;
}

.doc-tab {
    display: flex;
    align-items: center;
    gap: 9px;
    height: 28px;
    padding: 0 9px 0 30px;
    border: 1px solid #b8b8b8;
    border-top: 2px solid #00a8ff;
    border-bottom: none;
    background-color: #fff;
    color: #0091e0;
}

.doc-close {
    height: 17px;
    margin-right: 3px;
}

.grid-toolbar {
    height: 34px;
    padding: 0 0 2px 1px;
}

.grid-toolbar button {
    width: 23px;
    height: 23px;
}

.grid-toolbar .divider {
    height: 19px;
    margin: 0 3px;
}

/* Grids */
.grid-box {
    border: 1px solid #b8b8b8;
}

.grid-box table {
    width: 100%;
    table-layout: fixed;
    border-collapse: separate;
    border-spacing: 0;
}

.grid-box th,
.grid-box td {
    height: 20px;
    padding: 0 2px;
    border-right: 1px solid #b8b8b8;
    border-bottom: 1px solid #b8b8b8;
    text-align: left;
    white-space: nowrap;
}

.grid-box th {
    border-top: 1px solid #b8b8b8;
    background-color: #f5f5f5;
    font-weight: normal;
    text-align: center;
}

.grid-box .center {
    text-align: center;
}

.grid-box .mark {
    padding: 0;
    border-left: 1px solid #b8b8b8;
    background-color: #f5f5f5;
}

.mark svg {
    width: 7px;
    height: 7px;
    margin: 0 auto;
}

.col-mark {
    width: 12px;
}

.col-folio {
    width: 111px;
}

.col-start {
    width: 85px;
}

.col-end {
    width: 88px;
}

.col-contact {
    width: 166px;
}

.col-active {
    width: 77px;
}

.col-task-no {
    width: 191px;
}

.agreements {
    height: 160px;
}

.agreements th {
    height: 35px;
    padding-top: 4px;
    vertical-align: top;
}

.agreements th.mark {
    padding: 0;
    vertical-align: middle;
}

.agreements input {
    display: block;
    appearance: none;
    width: 13px;
    height: 13px;
    margin: 0 auto;
    border: 1px solid #777;
    background-color: #f5f5f5;
}

.agreements input:checked::before {
    content: "";
    display: block;
    width: 4px;
    height: 8px;
    margin: 0 0 0 4px;
    border: solid #666;
    border-width: 0 2px 2px 0;
    transform: rotate(40deg);
}

/* Focused row: dotted line along the top and bottom */
.selected td:not(.mark) {
    background-color: #00a8ff;
    background-image:
        repeating-linear-gradient(90deg, #ff5700 0 1px, transparent 1px 2px),
        repeating-linear-gradient(90deg, #ff5700 0 1px, transparent 1px 2px);
    background-position: top, bottom;
    background-size: 100% 1px;
    background-repeat: no-repeat;
    background-origin: padding-box;
    color: #fff;
}

.current {
    display: block;
    width: 0;
    margin: 0 auto;
    border: 4px solid transparent;
    border-left-color: #444;
    border-right: none;
}

.splitter {
    height: 11px;
    padding-top: 4px;
}

.splitter span {
    display: block;
    width: 16px;
    margin: 0 auto;
    border-top: 1px dotted #555;
}

/* Tasks and message */
.detail {
    display: flex;
    flex: 1;
    gap: 12px;
}

.tasks {
    display: flex;
    flex: 1;
    flex-direction: column;
}

.tasks .grid-toolbar {
    height: 32px;
    padding-bottom: 0;
}

.task-grid {
    display: flex;
    flex: 1;
    flex-direction: column;
}

.task-grid th {
    height: 19px;
}

.empty {
    margin: auto;
    padding-left: 12px;
    color: #aaa;
}

.message {
    width: 276px;
    padding-top: 55px;
    line-height: 13px;
}

.message-label {
    display: flex;
    gap: 17px;
    padding-left: 2px;
    color: #000;
}

.message-label svg {
    width: 22px;
    height: 22px;
    margin-top: 8px;
}

.message textarea {
    display: block;
    width: 269px;
    height: 110px;
    margin-top: 3px;
    padding: 2px 1px;
    border: 1px solid #b8b8b8;
    font: inherit;
    color: #333;
    resize: none;
}

.total {
    margin: 0;
    padding-left: 15px;
    line-height: 30px;
}

/* Status bar */
.statusbar {
    display: flex;
    height: 21px;
    margin-top: 1px;
    border-bottom: 2px solid #2b2b2b;
    line-height: 20px;
    white-space: nowrap;
}

.pane {
    padding-left: 3px;
    border-right: 1px solid #b8b8b8;
}

.pane-blank {
    width: 101px;
}

.pane-company {
    width: 355px;
    padding-left: 5px;
}

.pane-admin {
    flex: 1;
}

.pane-access {
    width: 85px;
}

.pane-small {
    width: 55px;
}

.pane-keys {
    display: flex;
    gap: 10px;
    width: 131px;
    margin-right: 85px;
    color: #aaa;
}

.pane-keys .on {
    color: #333;
}
```
